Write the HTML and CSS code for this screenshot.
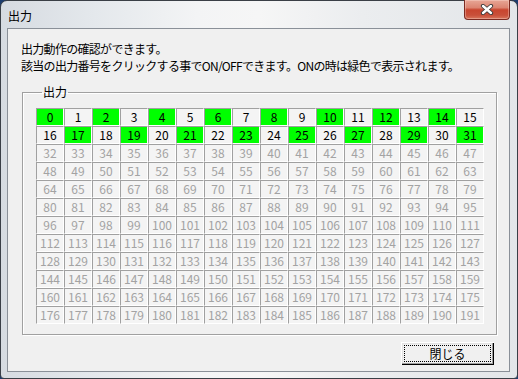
FILE: index.html
```html
<!DOCTYPE html>
<html lang="ja">
<head>
<meta charset="utf-8">
<title>出力</title>
<link rel="stylesheet" href="styles.css">
</head>
<body>
<div class="window">
  <div class="titlebar">
    <span class="title">出力</span>
    <button class="close" type="button" aria-label="閉じる">
      <svg width="14" height="11" viewBox="0 0 14 11">
        <path d="M3 2 L11 9 M11 2 L3 9" stroke="#3a3a3a" stroke-width="4.2" stroke-linecap="round"/>
        <path d="M3 2 L11 9 M11 2 L3 9" stroke="#ffffff" stroke-width="2.4" stroke-linecap="round"/>
      </svg>
    </button>
  </div>
  <div class="client">
    <div class="desc">
      <p>出力動作の確認ができます。</p>
      <p>該当の出力番号をクリックする事でON/OFFできます。ONの時は緑色で表示されます。</p>
    </div>
    <fieldset class="group">
      <legend>出力</legend>
      <div class="grid">
        <div class="cell on">0</div><div class="cell">1</div><div class="cell on">2</div><div class="cell">3</div><div class="cell on">4</div><div class="cell">5</div><div class="cell on">6</div><div class="cell">7</div><div class="cell on">8</div><div class="cell">9</div><div class="cell on">10</div><div class="cell">11</div><div class="cell on">12</div><div class="cell">13</div><div class="cell on">14</div><div class="cell">15</div>
        <div class="cell">16</div><div class="cell on">17</div><div class="cell">18</div><div class="cell on">19</div><div class="cell">20</div><div class="cell on">21</div><div class="cell">22</div><div class="cell on">23</div><div class="cell">24</div><div class="cell on">25</div><div class="cell">26</div><div class="cell on">27</div><div class="cell">28</div><div class="cell on">29</div><div class="cell">30</div><div class="cell on">31</div>
        <div class="cell off">32</div><div class="cell off">33</div><div class="cell off">34</div><div class="cell off">35</div><div class="cell off">36</div><div class="cell off">37</div><div class="cell off">38</div><div class="cell off">39</div><div class="cell off">40</div><div class="cell off">41</div><div class="cell off">42</div><div class="cell off">43</div><div class="cell off">44</div><div class="cell off">45</div><div class="cell off">46</div><div class="cell off">47</div>
        <div class="cell off">48</div><div class="cell off">49</div><div class="cell off">50</div><div class="cell off">51</div><div class="cell off">52</div><div class="cell off">53</div><div class="cell off">54</div><div class="cell off">55</div><div class="cell off">56</div><div class="cell off">57</div><div class="cell off">58</div><div class="cell off">59</div><div class="cell off">60</div><div class="cell off">61</div><div class="cell off">62</div><div class="cell off">63</div>
        <div class="cell off">64</div><div class="cell off">65</div><div class="cell off">66</div><div class="cell off">67</div><div class="cell off">68</div><div class="cell off">69</div><div class="cell off">70</div><div class="cell off">71</div><div class="cell off">72</div><div class="cell off">73</div><div class="cell off">74</div><div class="cell off">75</div><div class="cell off">76</div><div class="cell off">77</div><div class="cell off">78</div><div class="cell off">79</div>
        <div class="cell off">80</div><div class="cell off">81</div><div class="cell off">82</div><div class="cell off">83</div><div class="cell off">84</div><div class="cell off">85</div><div class="cell off">86</div><div class="cell off">87</div><div class="cell off">88</div><div class="cell off">89</div><div class="cell off">90</div><div class="cell off">91</div><div class="cell off">92</div><div class="cell off">93</div><div class="cell off">94</div><div class="cell off">95</div>
        <div class="cell off">96</div><div class="cell off">97</div><div class="cell off">98</div><div class="cell off">99</div><div class="cell off">100</div><div class="cell off">101</div><div class="cell off">102</div><div class="cell off">103</div><div class="cell off">104</div><div class="cell off">105</div><div class="cell off">106</div><div class="cell off">107</div><div class="cell off">108</div><div class="cell off">109</div><div class="cell off">110</div><div class="cell off">111</div>
        <div class="cell off">112</div><div class="cell off">113</div><div class="cell off">114</div><div class="cell off">115</div><div class="cell off">116</div><div class="cell off">117</div><div class="cell off">118</div><div class="cell off">119</div><div class="cell off">120</div><div class="cell off">121</div><div class="cell off">122</div><div class="cell off">123</div><div class="cell off">124</div><div class="cell off">125</div><div class="cell off">126</div><div class="cell off">127</div>
        <div class="cell off">128</div><div class="cell off">129</div><div class="cell off">130</div><div class="cell off">131</div><div class="cell off">132</div><div class="cell off">133</div><div class="cell off">134</div><div class="cell off">135</div><div class="cell off">136</div><div class="cell off">137</div><div class="cell off">138</div><div class="cell off">139</div><div class="cell off">140</div><div class="cell off">141</div><div class="cell off">142</div><div class="cell off">143</div>
        <div class="cell off">144</div><div class="cell off">145</div><div class="cell off">146</div><div class="cell off">147</div><div class="cell off">148</div><div class="cell off">149</div><div class="cell off">150</div><div class="cell off">151</div><div class="cell off">152</div><div class="cell off">153</div><div class="cell off">154</div><div class="cell off">155</div><div class="cell off">156</div><div class="cell off">157</div><div class="cell off">158</div><div class="cell off">159</div>
        <div class="cell off">160</div><div class="cell off">161</div><div class="cell off">162</div><div class="cell off">163</div><div class="cell off">164</div><div class="cell off">165</div><div class="cell off">166</div><div class="cell off">167</div><div class="cell off">168</div><div class="cell off">169</div><div class="cell off">170</div><div class="cell off">171</div><div class="cell off">172</div><div class="cell off">173</div><div class="cell off">174</div><div class="cell off">175</div>
        <div class="cell off">176</div><div class="cell off">177</div><div class="cell off">178</div><div class="cell off">179</div><div class="cell off">180</div><div class="cell off">181</div><div class="cell off">182</div><div class="cell off">183</div><div class="cell off">184</div><div class="cell off">185</div><div class="cell off">186</div><div class="cell off">187</div><div class="cell off">188</div><div class="cell off">189</div><div class="cell off">190</div><div class="cell off">191</div>
      </div>
    </fieldset>
    <div class="actions">
      <button class="btn" type="button"><span class="focus">閉じる</span></button>
    </div>
  </div>
</div>
</body>
</html>
```

FILE: styles.css
```css
html, body {
  margin: 0;
  padding: 0;
}
body {
  background: #1d3d6e;
  width: 518px;
  height: 379px;
  overflow: hidden;
  font-family: "Noto Sans CJK JP", "Liberation Sans", sans-serif;
  font-size: 12px;
  color: #000;
}
.window {
  box-sizing: border-box;
  width: 518px;
  height: 379px;
  border: 1px solid #3a3f46;
  border-radius: 7px 7px 4px 4px;
  background: linear-gradient(90deg, #d6dbe1 0%, #e4e8ec 18%, #f3f4f5 38%, #f6f6f6 50%, #ebedef 70%, #e3e6e9 100%);
  padding: 0 7px 6px 6px;
  display: flex;
  flex-direction: column;
}
.titlebar {
  height: 27px;
  flex: none;
  display: flex;
  justify-content: space-between;
  align-items: flex-start;
}
.title {
  padding-left: 1px;
  line-height: 29px;
  font-size: 12px;
}
.close {
  margin: -1px 0 0 0;
  padding: 0;
  width: 46px;
  height: 20px;
  box-sizing: border-box;
  border: 1px solid #7b2b22;
  border-top: none;
  border-radius: 0 0 4px 4px;
  background: linear-gradient(180deg, #e7a696 0%, #dc8572 40%, #c8452f 52%, #c9503a 80%, #d8765d 100%);
  box-shadow: inset 0 0 0 1px rgba(255, 230, 220, 0.35);
  display: flex;
  align-items: center;
  justify-content: center;
}
.close svg {
  display: block;
}
.client {
  flex: 1;
  background: #f0f0f0;
  border: 1px solid #8a9098;
  display: flex;
  flex-direction: column;
}
.desc {
  padding: 11px 0 0 13px;
}
.desc p {
  margin: 0;
  line-height: 17px;
  letter-spacing: -0.7px;
  white-space: nowrap;
}
.group {
  margin: 11px 0 0 14px;
  width: 475px;
  box-sizing: border-box;
  padding: 0 0 10px 13px;
  border: 1px solid #a0a0a0;
  box-shadow: inset 1px 1px 0 #ffffff, 1px 1px 0 #ffffff;
  min-width: 0;
}
.group legend {
  margin-left: 6px;
  padding: 0 1px;
  line-height: 14px;
  font-size: 12px;
}
.grid {
  margin-top: 9px;
  display: grid;
  grid-template-columns: repeat(16, 28px);
  grid-auto-rows: 18px;
}
.cell {
  box-sizing: border-box;
  border-left: 1px solid #a0a0a0;
  border-top: 1px solid #a0a0a0;
  border-right: 1px solid #ffffff;
  border-bottom: 1px solid #ffffff;
  background: #f4f4f4;
  text-align: center;
  line-height: 16px;
  font-size: 12px;
  color: #000;
}
.cell.on {
  background: #00ff00;
}
.cell.off {
  color: #a3a3a3;
}
.actions {
  display: flex;
  justify-content: flex-end;
  padding: 7px 15px 0 0;
}
.btn {
  box-sizing: border-box;
  width: 93px;
  height: 23px;
  padding: 3px;
  margin: 0;
  background: #f0f0f0;
  border: none;
  box-shadow: inset 1px 1px 0 #ffffff, inset -1px -1px 0 #000000, inset -2px -2px 0 #a0a0a0, inset 2px 2px 0 #e3e3e3;
  font-family: "Noto Sans CJK JP", "Liberation Sans", sans-serif;
  font-size: 12px;
  color: #000;
  display: flex;
}
.btn .focus {
  flex: 1;
  border: 1px dotted #000;
  display: flex;
  align-items: center;
  justify-content: center;
  line-height: 14px;
}
```
